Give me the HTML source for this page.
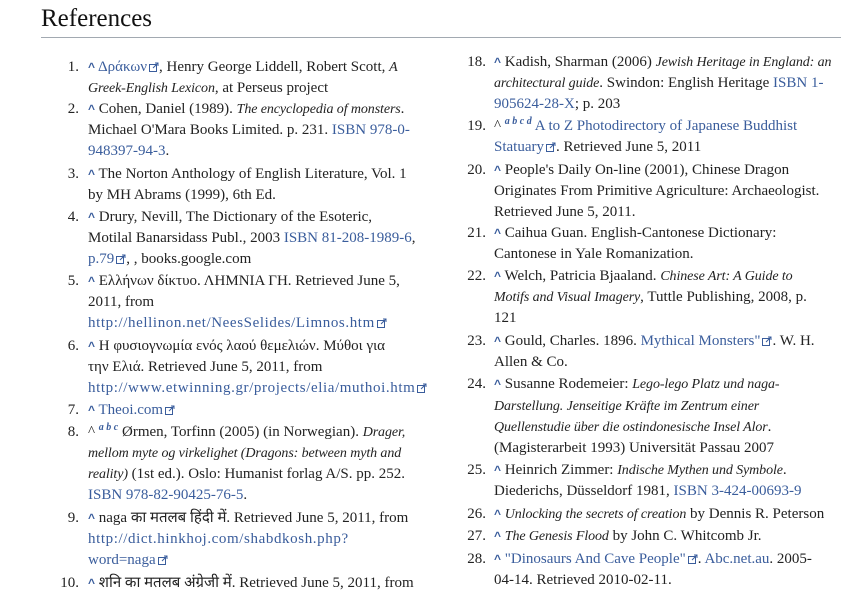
<!DOCTYPE html>
<html><head><meta charset="utf-8"><style>
body{margin:0;background:#fff;width:851px;height:581px;overflow:hidden;position:relative;font-family:"Liberation Serif","DejaVu Serif",serif;font-size:15px;color:#222}
h1{position:absolute;left:41px;top:5px;margin:0;font-weight:normal;font-size:25px;font-family:"Liberation Serif",serif;color:#111}
.rule{position:absolute;left:41px;top:37px;width:800px;height:1px;background:#a2a9b1}
.l{position:absolute;white-space:nowrap;line-height:21px;height:21px}
.n{position:absolute;white-space:nowrap;line-height:21px;text-align:right;width:30px}
a{color:#3a5d9c;text-decoration:none}
a.u{letter-spacing:0.6px}
.c{color:#3a5d9c;font-weight:bold;font-size:12px;font-family:"Liberation Sans",sans-serif}
i{font-style:italic;font-size:14px;letter-spacing:-0.1px}
sup{font-size:10px;color:#3a5d9c;font-style:italic;font-weight:bold;vertical-align:6px;line-height:0}
.e{display:inline-block;width:10px;height:10px;margin-left:2px;vertical-align:-1px}
</style></head><body>
<h1>References</h1><div class="rule"></div>
<div class="n" style="left:49px;top:57px">1.</div>
<div class="l" style="left:88px;top:57px"><span class="c">^</span> <a>Δράκων</a><svg class="e" viewBox="0 0 10 10"><rect x="0.5" y="2.5" width="7" height="7" fill="none" stroke="#3a5d9c"/><path d="M4 6L9 1M6 1h3v3" stroke="#3a5d9c" fill="none"/></svg>, Henry George Liddell, Robert Scott, <i>A</i></div>
<div class="l" style="left:88px;top:78px"><i>Greek-English Lexicon</i>, at Perseus project</div>
<div class="n" style="left:49px;top:99px">2.</div>
<div class="l" style="left:88px;top:99px"><span class="c">^</span> Cohen, Daniel (1989). <i>The encyclopedia of monsters</i>.</div>
<div class="l" style="left:88px;top:120px">Michael O'Mara Books Limited. p. 231. <a>ISBN 978-0-</a></div>
<div class="l" style="left:88px;top:141px"><a>948397-94-3</a>.</div>
<div class="n" style="left:49px;top:164px">3.</div>
<div class="l" style="left:88px;top:164px"><span class="c">^</span> The Norton Anthology of English Literature, Vol. 1</div>
<div class="l" style="left:88px;top:185px">by MH Abrams (1999), 6th Ed.</div>
<div class="n" style="left:49px;top:207px">4.</div>
<div class="l" style="left:88px;top:207px"><span class="c">^</span> Drury, Nevill, The Dictionary of the Esoteric,</div>
<div class="l" style="left:88px;top:228px">Motilal Banarsidass Publ., 2003 <a>ISBN 81-208-1989-6</a>,</div>
<div class="l" style="left:88px;top:249px"><a>p.79</a><svg class="e" viewBox="0 0 10 10"><rect x="0.5" y="2.5" width="7" height="7" fill="none" stroke="#3a5d9c"/><path d="M4 6L9 1M6 1h3v3" stroke="#3a5d9c" fill="none"/></svg>, , books.google.com</div>
<div class="n" style="left:49px;top:271px">5.</div>
<div class="l" style="left:88px;top:271px"><span class="c">^</span> Ελλήνων δίκτυο. ΛΗΜΝΙΑ ΓΗ. Retrieved June 5,</div>
<div class="l" style="left:88px;top:292px">2011, from</div>
<div class="l" style="left:88px;top:313px"><a class="u">http://hellinon.net/NeesSelides/Limnos.htm</a><svg class="e" viewBox="0 0 10 10"><rect x="0.5" y="2.5" width="7" height="7" fill="none" stroke="#3a5d9c"/><path d="M4 6L9 1M6 1h3v3" stroke="#3a5d9c" fill="none"/></svg></div>
<div class="n" style="left:49px;top:336px">6.</div>
<div class="l" style="left:88px;top:336px"><span class="c">^</span> Η φυσιογνωμία ενός λαού θεμελιών. Μύθοι για</div>
<div class="l" style="left:88px;top:357px">την Ελιά. Retrieved June 5, 2011, from</div>
<div class="l" style="left:88px;top:378px"><a class="u">http://www.etwinning.gr/projects/elia/muthoi.htm</a><svg class="e" viewBox="0 0 10 10"><rect x="0.5" y="2.5" width="7" height="7" fill="none" stroke="#3a5d9c"/><path d="M4 6L9 1M6 1h3v3" stroke="#3a5d9c" fill="none"/></svg></div>
<div class="n" style="left:49px;top:400px">7.</div>
<div class="l" style="left:88px;top:400px"><span class="c">^</span> <a>Theoi.com</a><svg class="e" viewBox="0 0 10 10"><rect x="0.5" y="2.5" width="7" height="7" fill="none" stroke="#3a5d9c"/><path d="M4 6L9 1M6 1h3v3" stroke="#3a5d9c" fill="none"/></svg></div>
<div class="n" style="left:49px;top:422px">8.</div>
<div class="l" style="left:88px;top:422px">^ <sup>a b c</sup> Ørmen, Torfinn (2005) (in Norwegian). <i>Drager,</i></div>
<div class="l" style="left:88px;top:443px"><i>mellom myte og virkelighet (Dragons: between myth and</i></div>
<div class="l" style="left:88px;top:464px"><i>reality)</i> (1st ed.). Oslo: Humanist forlag A/S. pp. 252.</div>
<div class="l" style="left:88px;top:485px"><a>ISBN 978-82-90425-76-5</a>.</div>
<div class="n" style="left:49px;top:508px">9.</div>
<div class="l" style="left:88px;top:508px"><span class="c">^</span> naga का मतलब हिंदी में. Retrieved June 5, 2011, from</div>
<div class="l" style="left:88px;top:529px"><a class="u">http://dict.hinkhoj.com/shabdkosh.php?</a></div>
<div class="l" style="left:88px;top:550px"><a>word=naga</a><svg class="e" viewBox="0 0 10 10"><rect x="0.5" y="2.5" width="7" height="7" fill="none" stroke="#3a5d9c"/><path d="M4 6L9 1M6 1h3v3" stroke="#3a5d9c" fill="none"/></svg></div>
<div class="n" style="left:49px;top:573px">10.</div>
<div class="l" style="left:88px;top:573px"><span class="c">^</span> शनि का मतलब अंग्रेजी में. Retrieved June 5, 2011, from</div>
<div class="n" style="left:456px;top:52px">18.</div>
<div class="l" style="left:494px;top:52px"><span class="c">^</span> Kadish, Sharman (2006) <i>Jewish Heritage in England: an</i></div>
<div class="l" style="left:494px;top:73px"><i>architectural guide</i>. Swindon: English Heritage <a>ISBN 1-</a></div>
<div class="l" style="left:494px;top:94px"><a>905624-28-X</a>; p. 203</div>
<div class="n" style="left:456px;top:116px">19.</div>
<div class="l" style="left:494px;top:116px">^ <sup>a b c d</sup> <a>A to Z Photodirectory of Japanese Buddhist</a></div>
<div class="l" style="left:494px;top:137px"><a>Statuary</a><svg class="e" viewBox="0 0 10 10"><rect x="0.5" y="2.5" width="7" height="7" fill="none" stroke="#3a5d9c"/><path d="M4 6L9 1M6 1h3v3" stroke="#3a5d9c" fill="none"/></svg>. Retrieved June 5, 2011</div>
<div class="n" style="left:456px;top:160px">20.</div>
<div class="l" style="left:494px;top:160px"><span class="c">^</span> People's Daily On-line (2001), Chinese Dragon</div>
<div class="l" style="left:494px;top:181px">Originates From Primitive Agriculture: Archaeologist.</div>
<div class="l" style="left:494px;top:202px">Retrieved June 5, 2011.</div>
<div class="n" style="left:456px;top:223px">21.</div>
<div class="l" style="left:494px;top:223px"><span class="c">^</span> Caihua Guan. English-Cantonese Dictionary:</div>
<div class="l" style="left:494px;top:244px">Cantonese in Yale Romanization.</div>
<div class="n" style="left:456px;top:266px">22.</div>
<div class="l" style="left:494px;top:266px"><span class="c">^</span> Welch, Patricia Bjaaland. <i>Chinese Art: A Guide to</i></div>
<div class="l" style="left:494px;top:287px"><i>Motifs and Visual Imagery</i>, Tuttle Publishing, 2008, p.</div>
<div class="l" style="left:494px;top:308px">121</div>
<div class="n" style="left:456px;top:331px">23.</div>
<div class="l" style="left:494px;top:331px"><span class="c">^</span> Gould, Charles. 1896. <a>Mythical Monsters"</a><svg class="e" viewBox="0 0 10 10"><rect x="0.5" y="2.5" width="7" height="7" fill="none" stroke="#3a5d9c"/><path d="M4 6L9 1M6 1h3v3" stroke="#3a5d9c" fill="none"/></svg>. W. H.</div>
<div class="l" style="left:494px;top:352px">Allen &amp; Co.</div>
<div class="n" style="left:456px;top:374px">24.</div>
<div class="l" style="left:494px;top:374px"><span class="c">^</span> Susanne Rodemeier: <i>Lego-lego Platz und naga-</i></div>
<div class="l" style="left:494px;top:396px"><i>Darstellung. Jenseitige Kräfte im Zentrum einer</i></div>
<div class="l" style="left:494px;top:417px"><i>Quellenstudie über die ostindonesische Insel Alor</i>.</div>
<div class="l" style="left:494px;top:438px">(Magisterarbeit 1993) Universität Passau 2007</div>
<div class="n" style="left:456px;top:460px">25.</div>
<div class="l" style="left:494px;top:460px"><span class="c">^</span> Heinrich Zimmer: <i>Indische Mythen und Symbole</i>.</div>
<div class="l" style="left:494px;top:481px">Diederichs, Düsseldorf 1981, <a>ISBN 3-424-00693-9</a></div>
<div class="n" style="left:456px;top:504px">26.</div>
<div class="l" style="left:494px;top:504px"><span class="c">^</span> <i>Unlocking the secrets of creation</i> by Dennis R. Peterson</div>
<div class="n" style="left:456px;top:526px">27.</div>
<div class="l" style="left:494px;top:526px"><span class="c">^</span> <i>The Genesis Flood</i> by John C. Whitcomb Jr.</div>
<div class="n" style="left:456px;top:549px">28.</div>
<div class="l" style="left:494px;top:549px"><span class="c">^</span> <a>"Dinosaurs And Cave People"</a><svg class="e" viewBox="0 0 10 10"><rect x="0.5" y="2.5" width="7" height="7" fill="none" stroke="#3a5d9c"/><path d="M4 6L9 1M6 1h3v3" stroke="#3a5d9c" fill="none"/></svg>. <a>Abc.net.au</a>. 2005-</div>
<div class="l" style="left:494px;top:570px">04-14. Retrieved 2010-02-11.</div>
</body></html>
